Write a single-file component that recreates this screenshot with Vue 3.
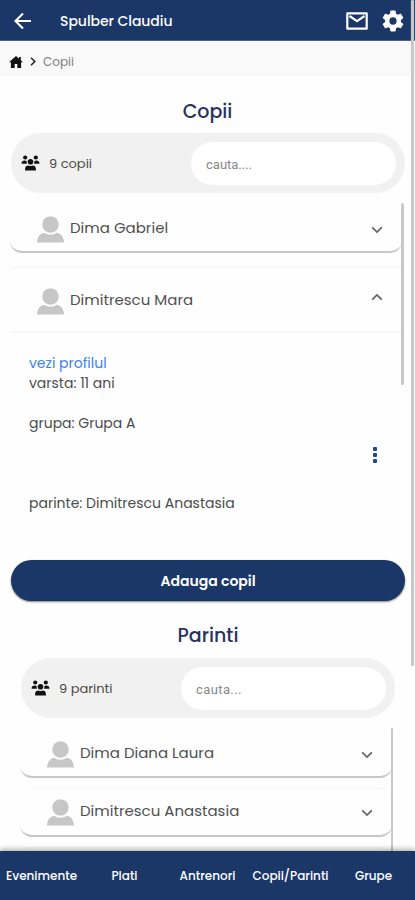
<script setup>
const parents = ['Dima Diana Laura', 'Dimitrescu Anastasia']
const tabs = ['Evenimente', 'Plati', 'Antrenori', 'Copii/Parinti', 'Grupe']
</script>

<template>
  <div class="screen">
    <svg class="defs" width="0" height="0" aria-hidden="true">
      <symbol id="person" viewBox="0 0 27 27">
        <path d="M0 26.500c.4-5.500 2.600-8.700 7-9.700 1.800 1.300 4 2 6.500 2s4.700-.7 6.500-2c4.400 1 6.600 4.200 7 9.700z" />
        <circle cx="13.500" cy="8.500" r="8.700" stroke="#fff" stroke-width="1" />
      </symbol>
      <symbol id="group" viewBox="0 0 18 16">
        <circle cx="3.700" cy="2.500" r="2.100" />
        <circle cx="14.300" cy="2.500" r="2.100" />
        <circle cx="9" cy="6.700" r="2.800" />
        <path d="M0 8.800C0 6.500 1.300 5.600 3.200 5.600c.9 0 1.600.2 2.100.6-.3 1-.2 1.900.2 2.600zM18 8.800c0-2.300-1.300-3.200-3.200-3.200-.9 0-1.600.2-2.100.6.3 1 .2 1.900-.2 2.600zM3.600 15.500v-1.600c0-2.200 1.400-3.400 3.400-3.400 1.300.7 2.700.7 4 0 2 0 3.400 1.200 3.400 3.400v1.600z" />
      </symbol>
      <symbol id="chevron" viewBox="0 0 12 8">
        <path d="M1.200 1.300 6 6.100l4.800-4.800" fill="none" stroke="currentColor" stroke-width="1.800" />
      </symbol>
    </svg>

    <header class="topbar">
      <svg class="back" viewBox="0 0 18 18"><path d="M17 9H2M9 1.500 1.500 9 9 16.500" fill="none" stroke="#fff" stroke-width="2.100" /></svg>
      <span class="who">Spulber Claudiu</span>
      <svg class="mail" viewBox="0 0 22 18"><path d="M1.300 1.300h19.400v15.400H1.300zM3.500 4 11 9.200 18.500 4" fill="none" stroke="#fff" stroke-width="2.200" stroke-linejoin="round" /></svg>
      <svg class="gear" viewBox="2 2 20 20"><path fill="#fff" d="M19.140 12.940c.04-.3.060-.61.060-.94 0-.32-.02-.64-.07-.94l2.030-1.580a.49.49 0 0 0 .12-.61l-1.920-3.320a.488.488 0 0 0-.59-.22l-2.390.96c-.5-.38-1.030-.7-1.620-.94l-.36-2.540a.484.484 0 0 0-.48-.41h-3.840c-.24 0-.43.17-.47.41l-.36 2.540c-.59.24-1.130.57-1.620.94l-2.390-.96c-.22-.08-.47 0-.59.22L2.740 8.870c-.12.21-.08.47.12.61l2.030 1.580c-.05.3-.09.63-.09.94s.02.64.07.94l-2.030 1.580a.49.49 0 0 0-.12.61l1.920 3.320c.12.22.37.29.59.22l2.390-.96c.5.38 1.030.7 1.620.94l.36 2.540c.05.24.24.41.48.41h3.840c.24 0 .44-.17.47-.41l.36-2.540c.59-.24 1.130-.56 1.620-.94l2.390.96c.22.08.47 0 .59-.22l1.920-3.320c.12-.22.07-.47-.12-.61zM12 15.300A3.300 3.300 0 1 1 12 8.700a3.300 3.300 0 0 1 0 6.600z" /></svg>
    </header>

    <nav class="crumbs">
      <svg class="home" viewBox="0 0 14 12"><path d="M7 0 0 6.300h1.900V12h3.800V8h2.600v4h3.800V6.300H14L11.800 4.300V1H10v1.700z" /></svg>
      <svg class="sep" viewBox="0 0 6 9"><path d="M1 .8 4.800 4.500 1 8.200" fill="none" stroke="#222" stroke-width="1.500" /></svg>
      <span class="crumb">Copii</span>
    </nav>

    <main class="content">
      <h2 class="title kids">Copii</h2>
      <div class="filter">
        <svg class="group"><use href="#group" /></svg>
        <span class="count">9 copii</span>
        <div class="search tight">cauta....</div>
      </div>

      <section class="list">
        <article class="card first">
          <svg class="person"><use href="#person" /></svg>
          <span class="name">Dima Gabriel</span>
          <svg class="chev"><use href="#chevron" /></svg>
        </article>
        <article class="panel">
          <div class="panel-head">
            <svg class="person"><use href="#person" /></svg>
            <span class="name">Dimitrescu Mara</span>
            <svg class="chev up"><use href="#chevron" /></svg>
          </div>
          <div class="details">
            <div class="facts">
              <a class="link">vezi profilul</a>
              <span class="age">varsta: 11 ani</span>
              <span class="team">grupa: Grupa A</span>
              <span class="parent">parinte: Dimitrescu Anastasia</span>
            </div>
            <div class="dots"><i /><i /><i /></div>
          </div>
        </article>
        <div class="thumb list-thumb" />
      </section>

      <button class="add">Adauga copil</button>

      <h2 class="title parents">Parinti</h2>
      <div class="filter second">
        <svg class="group"><use href="#group" /></svg>
        <span class="count">9 parinti</span>
        <div class="search">cauta...</div>
      </div>
      <section class="list second">
        <article v-for="(p, i) in parents" :key="p" class="card" :class="{ first: i === 0 }">
          <svg class="person"><use href="#person" /></svg>
          <span class="name">{{ p }}</span>
          <svg class="chev"><use href="#chevron" /></svg>
        </article>
        <article class="card" />
        <div class="thumb second-thumb" />
      </section>
    </main>

    <footer class="tabs">
      <a v-for="t in tabs" :key="t">{{ t }}</a>
    </footer>
    <div class="thumb page-thumb" />
  </div>
</template>

<style>
body { background: #fff; }
</style>

<style scoped>
.screen {
  position: relative; width: 415px; height: 900px; overflow: hidden;
  display: flex; flex-direction: column; background: #fefefe;
  font-family: Poppins, Inter, "Open Sans", sans-serif; color: #4a4a4a;
}
.screen * { box-sizing: border-box; }
.defs { position: absolute; }
svg { flex: none; display: block; }
span, a, button { white-space: nowrap; }
.topbar {
  height: 41px; flex: none; display: flex; align-items: center;
  background: #1b3768; border-bottom: 1px solid #4c6085; padding: 1px 11px 0 14px; color: #fff;
}
.back { width: 18px; height: 18px; }
.who { margin-left: 28px; font-size: 14px; font-weight: 500; flex: 1; letter-spacing: -.05px; padding-top: 1px; }
.mail { width: 22px; height: 18px; margin-right: 14px; }
.gear { width: 22px; height: 22px; }
.crumbs {
  height: 35px; flex: none; display: flex; align-items: center;
  background: #f9f9f9; padding: 5px 9px 0; border-top: 1px solid #fff;
}
.home { width: 14px; height: 12px; fill: #111; }
.sep { width: 6px; height: 9px; margin: 0 7px; }
.crumb { font-size: 12px; color: #808080; }
.content { flex: 1; min-height: 0; overflow: hidden; display: flex; flex-direction: column; }
.title {
  margin: 23px 0 0; height: 26px; line-height: 26px; text-align: center;
  font-size: 19px; font-weight: 500; color: #2a3160;
}
.filter {
  flex: none; height: 60px; margin: 8px 10px 0 11px; padding: 0 10px; width: 384px;
  border-radius: 30px; background: #f1f1f1; display: flex; align-items: center;
}
.filter:not(.second) { width: 394px; padding-right: 9px; }
.filter.second { margin: 9px 20px 0 21px; width: 374px; padding-right: 9px; }
.group { width: 19px; height: 16px; fill: #111; }
.count { margin-left: 9px; font-size: 13px; flex: 1; padding-top: 2px; }
.search {
  width: 205px; height: 43px; border-radius: 22px; background: #fff; padding: 1px 0 0 15px;
  line-height: 44px; font-family: Roboto, sans-serif; font-size: 13px; color: #888; letter-spacing: .4px;
}
.search.tight { letter-spacing: 0; }
.list { position: relative; flex: none; height: 342px; margin: 10px 10px 0; overflow: hidden; }
.card {
  width: 392px; height: 49px; border-radius: 12px; background: #fefefe;
  border-bottom: 2px solid #c8c8c8; border-top: 1px solid #f8f8f8;
  display: flex; align-items: center; padding: 0 19px 0 27px;
}
.card.first { height: 50px; border-top: 0; border-radius: 0 0 12px 12px; padding-top: 4px; }
.person { width: 27px; height: 27px; fill: #c7c7c7; }
.name { margin-left: 6px; font-size: 15px; flex: 1; color: #505050; padding-bottom: 4px; }
.chev { width: 12px; height: 8px; color: #666; margin-top: 2px; }
.chev.up { transform: rotate(180deg); margin-top: -10px; }
.panel { width: 393px; height: 279px; margin-top: 13px; border-top: 2px solid #f7f7f7; border-radius: 8px; }
.panel-head {
  height: 65px; display: flex; align-items: center; border-bottom: 2px solid #f7f7f7;
  padding: 4px 20px 0 27px;
}
.details { display: flex; padding: 20px 26px 0 19px; }
.facts { display: flex; flex-direction: column; flex: 1; font-size: 14px; line-height: 20px; color: #4c4c4c; align-items: flex-start; }
.link { color: #3f82ec; }
.team { margin-top: 20px; }
.parent { margin-top: 60px; }
.dots { padding-top: 94px; display: flex; flex-direction: column; gap: 2px; }
.dots i { width: 4px; height: 4px; background: #20459b; border-radius: 1px; }
.add {
  flex: none; height: 41px; width: 394px; margin: 15px 10px 0 11px; padding: 1px 0 0; border: 0; border-radius: 21px;
  background: #1b3768; color: #fff; font: 600 14px Poppins, Inter, sans-serif;
  box-shadow: 0 1px 2px rgba(0, 0, 0, .5);
}
.title.parents { margin-top: 22px; padding-left: 1px; }
.list.second { height: 123px; margin: 10px 20px 0; display: flex; flex-direction: column; gap: 10px; }
.second .card { width: 372px; flex: none; }
.thumb { position: absolute; background: #c8c8c8; border-radius: 2px; width: 3px; }
.list-thumb { right: 1px; top: 0; height: 182px; }
.second-thumb { right: 2px; top: 0; height: 123px; width: 2px; }
.page-thumb { right: 1px; top: 0; height: 666px; box-shadow: 0 0 1px #ddd; z-index: 2; }
.tabs {
  flex: none; height: 49px; display: grid; grid-template-columns: repeat(5, 83px); align-items: center;
  justify-items: center; background: #1b3768; color: #fff; font-size: 12px; font-weight: 500;
  box-shadow: 0 -2px 5px rgba(0, 0, 0, .3); z-index: 1;
}
</style>
